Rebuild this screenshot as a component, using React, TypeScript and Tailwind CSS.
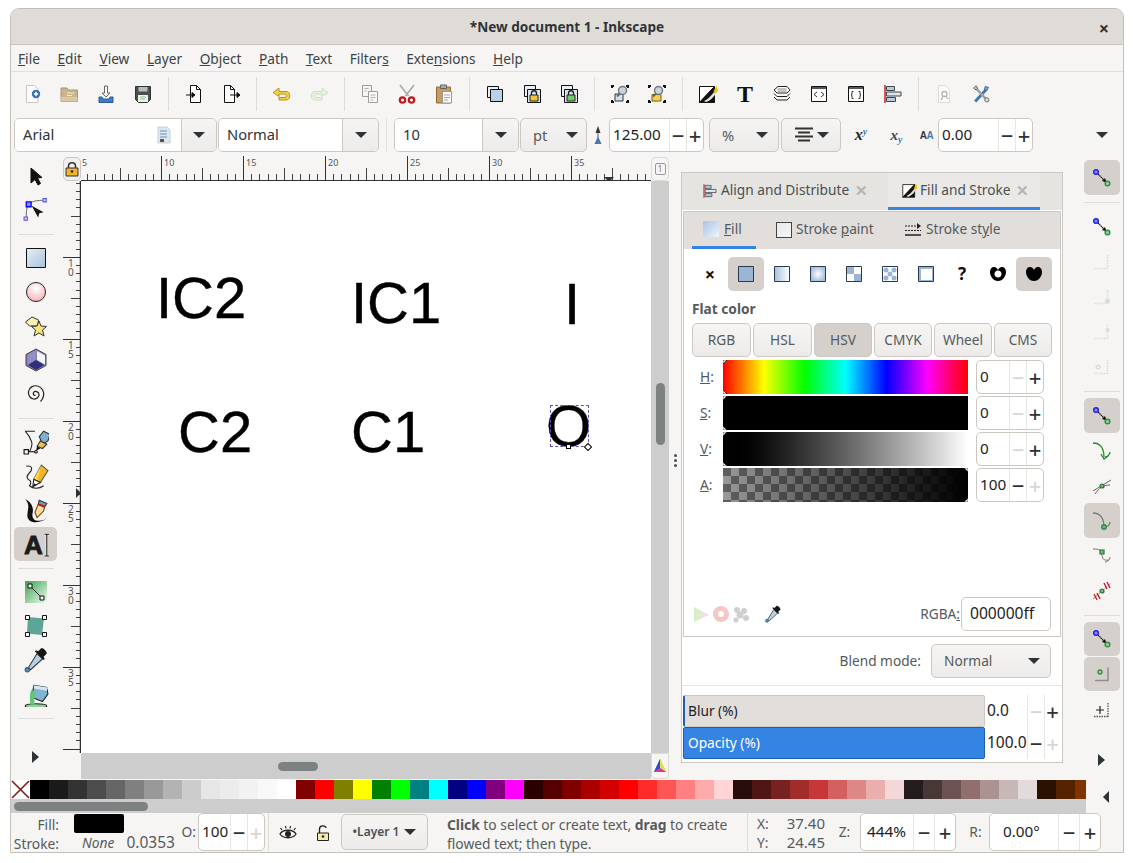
import React from 'react'

const Svg = ({ s = 24, children }: { s?: number; children: React.ReactNode }) => (
  <svg width={s} height={s} viewBox="0 0 24 24" className="block shrink-0">
    {children}
  </svg>
)

// ---- top toolbar icons ----
const IcNew = () => (
  <Svg>
    <path d="M6.500 3.500h8l3.500 3.500v13.500h-11.500z" fill="#fafafa" stroke="#c9c9c9" />
    <circle cx="16" cy="12" r="4.200" fill="#2f6fb5" />
    <path d="M13.800 12h4.400M16 9.800v4.400" stroke="#fff" strokeWidth="1.500" />
  </Svg>
)
const IcOpen = () => (
  <Svg>
    <path d="M4 6h6l1.500 2h9v11.500h-16.500z" fill="#c9b48c" stroke="#a8946e" />
    <path d="M10 11h7M10 13.500h5" stroke="#f3ead6" strokeWidth="1.200" />
    <path d="M4 15h16.500v4.500h-16.500z" fill="#d9c8a5" />
  </Svg>
)
const IcSave = () => (
  <Svg>
    <path d="M10.500 4h3v7h2.500l-4 4-4-4h2.500z" fill="#f4f4f4" stroke="#666" />
    <path d="M5 15h3l1 2h6l1-2h3v5.500h-14z" fill="#3c7fc4" stroke="#2a5d94" />
  </Svg>
)
const IcFloppy = () => (
  <Svg>
    <path d="M4.500 4.500h15v13l-3 3h-9l-3-3z" fill="#4c4f50" stroke="#333" />
    <path d="M7.500 5h9v4.500h-9z" fill="#b9bcbc" />
    <path d="M7 13h10v7h-10z" fill="#eef2ea" />
    <path d="M9 15h6M9 17h5" stroke="#97c78e" />
  </Svg>
)
const IcImport = () => (
  <Svg>
    <path d="M8.500 3.500h6l4 4v13h-10z" fill="#fff" stroke="#111" />
    <path d="M14.500 3.500v4h4" fill="none" stroke="#111" />
    <path d="M4 13h8M10 10.500l3 2.500-3 2.500z" stroke="#111" fill="#111" />
  </Svg>
)
const IcExport = () => (
  <Svg>
    <path d="M5.500 3.500h6l4 4v13h-10z" fill="#fff" stroke="#111" />
    <path d="M11.500 3.500v4h4" fill="none" stroke="#111" />
    <path d="M11 13h9M18 10.500l3 2.500-3 2.500z" stroke="#111" fill="#111" />
  </Svg>
)
const IcUndo = ({ pale }: { pale?: boolean }) => (
  <Svg>
    <path
      d="M9 6l-6 4.500 6 4v-2.500h6c2 0 2 3.500 0 3.500h-6v2.500h7c5 0 5-8.500 0-8.500h-7z"
      fill={pale ? '#e7f1e0' : '#f0d24a'}
      stroke={pale ? '#cfe0c4' : '#b9930f'}
      strokeWidth="1"
      transform={pale ? 'matrix(-1 0 0 1 24 0)' : undefined}
    />
  </Svg>
)
const IcCopy = () => (
  <Svg>
    <path d="M4.500 3.500h9v11h-9z" fill="#f6f5f4" stroke="#9c9c9c" />
    <path d="M10.500 9.500h9v11h-9z" fill="#fbfbfb" stroke="#9c9c9c" />
    <path d="M6.500 6.500h4M6.500 9h2M12.500 13h5M12.500 15.500h5M12.500 18h3" stroke="#b0b0b0" />
  </Svg>
)
const IcCut = () => (
  <Svg>
    <path d="M5 3l8.500 11M19 3l-8.500 11" stroke="#a9adad" strokeWidth="1.800" />
    <circle cx="7.500" cy="18" r="2.700" fill="#fff" stroke="#c4161c" strokeWidth="2.200" />
    <circle cx="16.500" cy="18" r="2.700" fill="#fff" stroke="#c4161c" strokeWidth="2.200" />
  </Svg>
)
const IcPaste = () => (
  <Svg>
    <path d="M4.500 5h14v16h-14z" fill="#c99a5e" stroke="#8f6a3a" />
    <path d="M8.500 3h6v3.500h-6z" fill="#aaa" stroke="#666" />
    <path d="M10.500 9.500h9v11.500h-9z" fill="#fafafa" stroke="#999" />
    <path d="M12 13h6M12 15.500h6M12 18h4" stroke="#aaa" />
  </Svg>
)
const IcDup = () => (
  <Svg>
    <path d="M4.500 4.500h11v11h-11z" fill="#e8eff6" stroke="#111" />
    <path d="M7.500 7.500h12v12h-12z" fill="#b9d0e6" stroke="#111" />
  </Svg>
)
const Lock = ({ c }: { c: string }) => (
  <>
    <path d="M11.500 13v-2c0-3 5-3 5 0v2" fill="none" stroke="#222" strokeWidth="1.300" />
    <path d="M10 13h8v6h-8z" fill={c} stroke="#222" />
  </>
)
const IcClone = ({ c }: { c: string }) => (
  <Svg>
    <path d="M4.500 3.500h11v11h-11z" fill="#e8eff6" stroke="#111" />
    <path d="M7.500 7.500h13v13h-13z" fill="#d8e4ef" stroke="#111" />
    <Lock c={c} />
  </Svg>
)
const Corners = () => (
  <path d="M3 3h3v2h-1v1h-2zM18 3h3v3h-2v-1h-1zM3 18h2v1h1v2h-3zM19 18h2v3h-3v-2h1z" fill="#111" />
)
const IcZoomSel = () => (
  <Svg>
    <Corners />
    <path d="M7 12h8v7h-8z" fill="#d5e3ef" stroke="#333" />
    <circle cx="14.500" cy="8.500" r="4" fill="#c7d6e4" stroke="#777" strokeWidth="1.500" />
    <path d="M12 11.500l-3 3" stroke="#666" strokeWidth="1.800" />
  </Svg>
)
const IcZoomDraw = () => (
  <Svg>
    <Corners />
    <path d="M7 12.500h9v6.500h-9z" fill="#f2cf55" stroke="#7a5c00" />
    <circle cx="13.500" cy="8.500" r="4" fill="#c7d6e4" stroke="#777" strokeWidth="1.500" />
    <path d="M11 11.500l-3 3" stroke="#666" strokeWidth="1.800" />
  </Svg>
)
const IcFillStroke = ({ s = 24 }: { s?: number }) => (
  <Svg s={s}>
    <path d="M3.500 4.500h15l-15 16z" fill="#fff" stroke="#111" />
    <path d="M3.500 20.500l15-16v16z" fill="#111" stroke="#111" />
    <path d="M8 19c3-1 7-5 10-9l2 1c-2 4-6 8-10 9z" fill="#e2e2e2" />
    <path d="M17.500 9.500l3-6 1.500 5-2 3z" fill="#f4c20d" />
  </Svg>
)
const IcT = () => (
  <Svg>
    <text x="12" y="20" textAnchor="middle" fontFamily="'Liberation Serif', serif" fontWeight="700" fontSize="24" fill="#111">
      T
    </text>
  </Svg>
)
const IcLayers = () => (
  <Svg>
    <path d="M4 8l4-3.500h9l3 3.500-3 3h-10z" fill="#fff" stroke="#222" />
    <path d="M4 11.500l3 3h10l3-3M4 15l3 3h10l3-3" fill="none" stroke="#222" />
    <path d="M7.500 7h9M7.500 9h9" stroke="#888" />
  </Svg>
)
const IcXml = () => (
  <Svg>
    <path d="M4.500 4.500h15v15h-15z" fill="#fff" stroke="#111" />
    <path d="M5 5h14v2h-14z" fill="#555" />
    <path d="M10 10l-3 2.500 3 2.500M14 10l3 2.500-3 2.500" fill="none" stroke="#333" />
  </Svg>
)
const IcObj = () => (
  <Svg>
    <path d="M4.500 4.500h15v15h-15z" fill="#fff" stroke="#111" />
    <path d="M5 5h14v2h-14z" fill="#555" />
    <path d="M9.500 9.500h-1.500v3l-1 .5 1 .5v3h1.500M14.500 9.500h1.500v3l1 .5-1 .5v3h-1.500" fill="none" stroke="#333" />
  </Svg>
)
const IcAlign = ({ s = 24 }: { s?: number }) => (
  <Svg s={s}>
    <path d="M4 3v18" stroke="#c2181f" strokeWidth="1.400" />
    <path d="M5.500 4.500h8v4h-8z" fill="#b4cbe0" stroke="#444" />
    <path d="M5.500 10h14.500v4h-14.500z" fill="#dbe5ef" stroke="#444" />
    <path d="M5.500 15.500h9v4h-9z" fill="#b4cbe0" stroke="#444" />
  </Svg>
)
const IcDocProps = () => (
  <Svg>
    <path d="M6.500 3.500h7l4 4v13h-11z" fill="#fafafa" stroke="#dcdcdc" />
    <circle cx="12.500" cy="12" r="2.500" fill="none" stroke="#b4b4b4" strokeWidth="1.300" />
    <path d="M11 14l-2 4M14 14l2 3" stroke="#b4b4b4" strokeWidth="1.300" />
  </Svg>
)
const IcTools = () => (
  <svg width="20" height="20" viewBox="0 0 24 24" className="block">
    <path d="M5 21l13-14" stroke="#3a78b5" strokeWidth="3.500" />
    <path d="M5 4l14 15" stroke="#9ba3a8" strokeWidth="3" />
    <path d="M17 3l4 1-2 4-3-1z" fill="#7ea6ca" stroke="#33597e" />
    <path d="M3 5l3-3 2 3-2 2z" fill="#bcc4c9" stroke="#555" />
    <circle cx="19" cy="19" r="2.500" fill="#dfe3e6" stroke="#555" />
  </svg>
)

// ---- left toolbar icons ----
const IcSelector = () => (
  <Svg>
    <path d="M7 4v15l4-3.500 3 5.500 2.500-1.500-3-5.500 4.500-.5z" fill="#111" stroke="#111" />
  </Svg>
)
const IcNode = () => (
  <Svg s={26}>
    <path d="M5 7c2-3 8-4 15-4M5 7c-2 3-2 7-2 13" fill="none" stroke="#555" strokeWidth="0.800" />
    <path d="M3 4.500h4.500v4.500h-4.500z" fill="#8d8dff" stroke="#0000ff" strokeWidth="1.200" />
    <path d="M18.500 1.500h3v3h-3zM1 18.500h3v3h-3z" fill="#d8d8ff" stroke="#5555ee" />
    <path d="M8 8l11 6-4 1-1 4z" fill="#111" />
  </Svg>
)
const IcRect = () => (
  <svg width="20" height="20" viewBox="0 0 20 20" className="block">
    <defs>
      <linearGradient id="rectg" x1="0" y1="0" x2="1" y2="1">
        <stop offset="0" stopColor="#e7eff7" />
        <stop offset="1" stopColor="#a6c3dc" />
      </linearGradient>
    </defs>
    <path d="M.500 .500h19v19h-19z" fill="url(#rectg)" stroke="#111" />
  </svg>
)
const IcEllipse = () => (
  <svg width="20" height="20" viewBox="0 0 20 20" className="block">
    <defs>
      <radialGradient id="ellg" cx="0.500" cy="0.300" r="0.800">
        <stop offset="0" stopColor="#fff" />
        <stop offset="1" stopColor="#f9aab0" />
      </radialGradient>
    </defs>
    <circle cx="10" cy="10" r="9.500" fill="url(#ellg)" stroke="#222" />
  </svg>
)
const IcStar = () => (
  <Svg>
    <path d="M1.500 8l6.500-5 6.500 3-1 6h-8z" fill="#faf0b0" stroke="#333" />
    <path d="M15 7l2 5 5.500 .5-4 3.500 1.500 6-5-3-5 3 1.500-6-4-3.500 5.500-.5z" fill="#f6e57c" stroke="#333" />
  </Svg>
)
const Ic3d = () => (
  <Svg>
    <path d="M12 1l10 5.500v11l-10 5.500-10-5.500v-11z" fill="#7f7fb8" stroke="#444" />
    <path d="M13 3l8 4.500v9l-8-4.500z" fill="#f4f4fa" />
    <path d="M4 17l8-5 8 5-8 5z" fill="#2f2f77" />
    <path d="M3.500 7l8.500-5v9l-8.500 6z" fill="#9090c4" />
  </Svg>
)
const IcSpiral = () => (
  <Svg>
    <path
      d="M12.500 13c-1.500 1-3-1-2-2.500 1.500-2 5-1 5.500 1.500.5 3-2.500 5.500-5.500 5-3.500-.5-5.500-4-5-7.500.5-4 5-6.500 9-5.500 4.500 1 7 5.500 6 10-.500 2.500-1.500 4-3 5.500"
      fill="none"
      stroke="#222"
      strokeWidth="1.200"
      transform="translate(-1 0)"
    />
  </Svg>
)
const IcPen = () => (
  <Svg s={26}>
    <path d="M2 2h9M2 2c3 3 5 7 6 10s-1 7-2 9" fill="none" stroke="#222" />
    <path d="M1 19h4v4h-4z" fill="#fff" stroke="#111" />
    <path d="M5 21h7" stroke="#111" />
    <circle cx="12" cy="21" r="1.200" fill="#fff" stroke="#111" />
    <path d="M15 7l4-5 6 3-2 6-5 3z" fill="#7fb0cf" stroke="#333" />
    <path d="M13 16l3-5 6 3-4 4z" fill="#f0c24a" stroke="#333" />
    <path d="M13 16l-1 4 4-2z" fill="#111" />
  </Svg>
)
const IcPencil = () => (
  <Svg s={26}>
    <path d="M3 3c6-1 6 3 3 6s-3 5 0 7c2 1 1 4 0 5 3 3 9 3 13 0" fill="none" stroke="#222" />
    <path d="M17 2l6 5-7 11-6-3z" fill="#f7b51d" stroke="#555" />
    <path d="M17 2l-7 13 3 1.500z" fill="#fbdc55" />
    <path d="M10 15l6 3-7 4z" fill="#fff" stroke="#222" />
    <path d="M9 22l1.500-3 2 1z" fill="#111" />
  </Svg>
)
const IcCalli = () => (
  <Svg s={26}>
    <path d="M2 2c5 2 8 7 7 12-1 4 0 8 6 8 3 0 5-1 7-3-3 5-18 7-18-2 0-5 3-10-2-15z" fill="#111" />
    <path d="M15 3l7 3-2 3-6-2z" fill="#6d9fc5" stroke="#333" />
    <path d="M14 7l6 2-1 4-6 6-2-5z" fill="#f6dfa3" stroke="#7a3b00" />
    <path d="M15 7l5 2" stroke="#c4161c" strokeWidth="2" />
  </Svg>
)
const IcTextTool = () => (
  <Svg s={26}>
    <text x="1" y="21" fontFamily="'Liberation Sans', sans-serif" fontWeight="700" fontSize="24" stroke="#1b1b1b" strokeWidth="0.800" fill="#1b1b1b">
      A
    </text>
    <path d="M20 3h4M22 3v20M20 23h4" stroke="#fff" strokeWidth="2" fill="none" />
    <path d="M20 3h4M22 3v20M20 23h4" stroke="#111" fill="none" />
  </Svg>
)
const IcGrad = () => (
  <svg width="22" height="22" viewBox="0 0 22 22" className="block">
    <defs>
      <linearGradient id="gradg" x1="0" y1="0" x2="1" y2="1">
        <stop offset="0" stopColor="#3aa24a" />
        <stop offset="1" stopColor="#f2fbf2" />
      </linearGradient>
    </defs>
    <path d="M0 0h22v22h-22z" fill="url(#gradg)" />
    <path d="M5 5l12 12" stroke="#333" />
    <path d="M3 3h4v4h-4zM15 15h4v4h-4z" fill="#f4f4f4" stroke="#111" />
  </svg>
)
const IcMesh = () => (
  <Svg>
    <path d="M4 3l16 1.500-2 16.500-15-1.500z" fill="#5fa597" />
    <path d="M1.500 1.500h4v4h-4zM18.500 1.500h4v4h-4zM1.500 18.500h4v4h-4zM18.500 18.500h4v4h-4z" fill="#fff" stroke="#111" />
  </Svg>
)
const IcDropper = ({ s = 24 }: { s?: number }) => (
  <Svg s={s}>
    <path d="M13 6l5 5-11 10-2-2z" fill="#b7d0e3" stroke="#333" />
    <path d="M14 4l3-3c2 0 5 3 5 5l-3 3 1 2-1 1-8-8 1-1z" fill="#151515" />
    <circle cx="4" cy="21" r="2" fill="#5a94bd" stroke="#2c5d80" />
  </Svg>
)
const IcBucket = () => (
  <Svg s={26}>
    <ellipse cx="12" cy="23" rx="10" ry="2" fill="#8fd19a" stroke="#222" />
    <path d="M10 4l12 2 1 6-5 7-10-4z" fill="#7fb3cf" stroke="#222" />
    <path d="M10 4l13 2-1 3-12-2z" fill="#d5e6ef" />
    <path d="M8 8c-2 3-2 8-1 14h4c-1-4-1-7 1-10z" fill="#66c37a" />
  </Svg>
)

// ---- snap bar icons ----
const SnapPair = () => (
  <svg width="20" height="20" viewBox="0 0 20 20" className="block">
    <circle cx="4" cy="4" r="2.300" fill="#8b8bff" stroke="#2222ee" strokeWidth="1.500" />
    <path d="M6 6l7 7" stroke="#111" strokeWidth="1.200" strokeDasharray="1.500 .5" />
    <path d="M14.500 14.500l-4.500-1.500 3-3z" fill="#111" />
    <circle cx="15.500" cy="15.500" r="2.300" fill="#9bd39b" stroke="#2f8f3f" strokeWidth="1.500" />
  </svg>
)
const SnapFaded = ({ k }: { k: number }) => (
  <svg width="20" height="20" viewBox="0 0 20 20" className="block">
    <path d="M2 16.500h13M15.500 17v-14" stroke="#dcdcd8" strokeWidth="1.500" strokeDasharray="1.500 1" fill="none" />
    {k === 1 && <circle cx="15.500" cy="14" r="2.500" fill="#d3e2d3" />}
    {k === 2 && <circle cx="15.500" cy="8" r="2" fill="#d3e2d3" />}
    {k === 3 && <circle cx="6" cy="10" r="2" fill="#eef3ee" stroke="#c9d9cf" />}
  </svg>
)
const SnapCurve = ({ g }: { g?: boolean }) => (
  <svg width="20" height="20" viewBox="0 0 20 20" className="block">
    <path d="M1 2c6 0 11 4 11 14M13 16c2 0 5-2 5-5" fill="none" stroke={g ? '#1d8b27' : '#777'} strokeWidth="1.300" />
    {g ? (
      <path d="M9 13l3 5 4-3" fill="none" stroke="#1d8b27" strokeWidth="1.300" />
    ) : (
      <circle cx="12" cy="16" r="2.300" fill="#8a9" stroke="#2f8f3f" strokeWidth="1.400" />
    )}
  </svg>
)
const SnapCusp = () => (
  <svg width="20" height="20" viewBox="0 0 20 20" className="block">
    <path d="M1 3c6 0 9 1 9 5 0 4 1 7 7 6M13 16c2 0 5-2 5-5" fill="none" stroke="#777" />
    <path d="M8 4h4v4h-4z" fill="#8a9" stroke="#1d7b27" strokeWidth="1.200" />
  </svg>
)
const SnapCross = () => (
  <svg width="20" height="20" viewBox="0 0 20 20" className="block">
    <path d="M1 15l18-11M3 18c4-6 8-9 15-9" fill="none" stroke="#666" />
    <circle cx="10" cy="10" r="2" fill="#8a9" stroke="#1d7b27" strokeWidth="1.200" />
  </svg>
)
const SnapLine = () => (
  <svg width="20" height="20" viewBox="0 0 20 20" className="block">
    <path d="M1 18L19 2" stroke="#cc1020" strokeWidth="1" strokeDasharray="1 1" />
    <path d="M2 13l3 6M5 12l3 6M12 2l3 6M15 1l3 6" stroke="#cc1020" strokeWidth="1.300" />
    <circle cx="10" cy="10" r="2" fill="#8a9" stroke="#1d7b27" strokeWidth="1.200" />
  </svg>
)
const SnapMid = () => (
  <svg width="20" height="20" viewBox="0 0 20 20" className="block">
    <path d="M3 16.500h13v-13" fill="none" stroke="#8f8f8f" strokeWidth="1.500" />
    <circle cx="8" cy="8" r="2" fill="#9bd39b" stroke="#2f8f3f" strokeWidth="1.300" />
  </svg>
)
const SnapGuide = () => (
  <svg width="20" height="20" viewBox="0 0 20 20" className="block">
    <path d="M2 16.500h14M16 17v-14" stroke="#555" strokeWidth="1.300" strokeDasharray="1.500 1" fill="none" />
    <path d="M4 10h8M8 6v8" stroke="#222" strokeWidth="1.200" />
  </svg>
)

// ---- paint mode icons ----
const Paint = ({ fill, extra }: { fill: string; extra?: React.ReactNode }) => (
  <svg width="16" height="16" viewBox="0 0 16 16" className="block">
    <path d="M.500 .500h15v15h-15z" fill={fill} stroke="#2a3a4a" />
    {extra}
  </svg>
)
const PaintDefs = () => (
  <svg width="0" height="0" className="absolute">
    <defs>
      <linearGradient id="plin">
        <stop offset="0" stopColor="#a7c1de" />
        <stop offset="1" stopColor="#fff" />
      </linearGradient>
      <radialGradient id="prad">
        <stop offset="0" stopColor="#fff" />
        <stop offset="1" stopColor="#a7c1de" />
      </radialGradient>
    </defs>
  </svg>
)
const Heart = ({ hole }: { hole?: boolean }) => (
  <svg width="16" height="16" viewBox="0 0 16 16" className="block">
    <path d="M4 1c2 0 3 1 4 3 1-2 2-3 4-3 2.500 0 4 2 4 5 0 4-3 9-8 9s-8-5-8-9c0-3 1.500-5 4-5z" fill="#000" />
    {hole && <path d="M8 4.500c2 0 3.500 1.500 3.500 3.500s-1.500 3.500-3.500 3.500-3.500-1.500-3.500-3.500 1.500-3.500 3.500-3.500z" fill="#fff" />}
  </svg>
)

// ---- shared bits ----
const Chevron = ({ className = '' }: { className?: string }) => (
  <span className={`w-0 h-0 border-x-[6px] border-x-transparent border-t-[6px] border-t-[#2e3436] ${className}`} />
)

const Sep = () => (
  <div className="w-[14px] h-[34px] flex justify-center shrink-0">
    <div className="w-px h-full bg-[#dedcd9]" />
  </div>
)
const HSep = () => (
  <div className="h-[14px] flex items-center justify-center w-full shrink-0">
    <div className="h-px w-[36px] bg-[#dedcd9]" />
  </div>
)

const Tool = ({ children }: { children: React.ReactNode }) => (
  <div className="w-[37px] h-[34px] flex items-center justify-center shrink-0">{children}</div>
)
const VTool = ({ children, on }: { children: React.ReactNode; on?: boolean }) => (
  <div className={`h-[34px] w-[43px] flex items-center justify-center rounded-[5px] shrink-0 ${on ? 'bg-[#d5d0cc]' : ''}`}>
    {children}
  </div>
)

const Combo = ({ text, className, arrow, icon }: { text: string; className: string; arrow: string; icon?: React.ReactNode }) => (
  <div className={`h-[34px] flex rounded-[5px] border border-[#cdc7c2] shrink-0 overflow-hidden ${className}`}>
    <div className="flex-1 bg-white flex items-center pl-[8px] pr-[10px] pb-[2px] justify-between">
      <span>{text}</span>
      {icon}
    </div>
    <div className={`${arrow} border-l border-[#cdc7c2] bg-gradient-to-b from-[#f6f5f4] to-[#edebe9] flex items-center justify-center`}>
      <Chevron />
    </div>
  </div>
)

const Select = ({ text, className }: { text: React.ReactNode; className: string }) => (
  <div className={`h-[34px] flex items-center justify-between rounded-[5px] border border-[#cdc7c2] bg-gradient-to-b from-[#f6f5f4] to-[#edebe9] shrink-0 ${className}`}>
    {text}
    <Chevron />
  </div>
)

const Spin = ({
  value,
  className,
  entry = 'pl-[3px]',
  noMinus,
  noPlus,
  btn = 'w-[17px]',
  hClass = 'h-[34px]',
}: {
  value: string
  className: string
  entry?: string
  noMinus?: boolean
  noPlus?: boolean
  btn?: string
  hClass?: string
}) => (
  <div className={`${hClass} flex rounded-[5px] border border-[#cdc7c2] bg-white shrink-0 overflow-hidden ${className}`}>
    <div className={`flex-1 flex items-center pb-[2px] text-[15.300px] text-[#1d1d1d] ${entry}`}>{value}</div>
    <div className={`${btn} border-l border-[#e8e6e3] flex items-center justify-center text-[22px] font-medium leading-none ${noMinus ? 'text-[#d6d6d4]' : 'text-[#2e3436]'}`}>
      −
    </div>
    <div className={`${btn} border-l border-[#e8e6e3] flex items-center justify-center text-[22px] font-medium leading-none ${noPlus ? 'text-[#d6d6d4]' : 'text-[#2e3436]'}`}>
      +
    </div>
  </div>
)

// ---- rulers ----
const xMajors = [79, 161, 243, 325, 407, 489, 571]
const TopRuler = () => {
  const ticks: React.ReactNode[] = []
  for (let i = 0; i < 70; i++) {
    const x = 81 - 63 + 8.2 * i - 2
    const big = i % 10 === 0
    const mid = i % 5 === 0
    ticks.push(
      <path key={i} d={`M${Math.round(x) + 0.5} 26V${big ? 1 : mid ? 13 : 19}`} stroke={big ? '#2e3436' : '#3c4144'} strokeWidth="1" />
    )
  }
  return (
    <svg width="570" height="26" className="block" viewBox="18 0 570 26">
      {ticks}
      {xMajors.map((x, i) => (
        <text key={x} x={x - 63 + 3} y="11" fontSize="9" fill="#555" fontFamily="'Noto Sans', sans-serif">
          {5 + i * 5}
        </text>
      ))}
      <path d="M18 25.500h570" stroke="#2e3436" />
      <path d="M541 22h10l-5 5z" fill="#2e3436" />
    </svg>
  )
}

const leftLabels = [10, 15, 20, 25, 30, 35]
const LeftRuler = () => {
  const ticks: React.ReactNode[] = []
  for (let i = 0; i < 70; i++) {
    const y = 2 + 8.2 * i - 0.1
    const major = i % 10 === 9
    const mid = i % 10 === 4
    ticks.push(
      <path key={i} d={`M18 ${Math.round(y) + 0.5}H${major ? 0 : mid ? 8 : 13}`} stroke={major ? '#2e3436' : '#3c4144'} strokeWidth="1" />
    )
  }
  return (
    <svg width="18" height="572" className="block">
      {ticks}
      {leftLabels.map((v, i) => {
        const [a, b] = String(v).split('')
        const y = 75 + i * 82
        return (
          <g key={v} fontSize="10" fill="#555" fontFamily="'Noto Sans', sans-serif">
            <text x="5" y={y + 11}>{a}</text>
            <text x="5" y={y + 20}>{b}</text>
          </g>
        )
      })}
      <path d="M17.500 0v572" stroke="#2e3436" strokeWidth="1.500" />
      <path d="M13 307v10l5-5z" fill="#2e3436" />
    </svg>
  )
}

// ---- palette ----
const swatches = [
  '#000000', '#1a1a1a', '#333333', '#4d4d4d', '#666666', '#808080', '#999999', '#b3b3b3', '#cccccc', '#e6e6e6', '#ececec', '#f2f2f2', '#f9f9f9', '#ffffff',
  '#800000', '#ff0000', '#808000', '#ffff00', '#008000', '#00ff00', '#008080', '#00ffff', '#000080', '#0000ff', '#800080', '#ff00ff',
  '#2b0000', '#550000', '#800000', '#aa0000', '#d40000', '#ff0000', '#ff2a2a', '#ff5555', '#ff8080', '#ffaaaa', '#ffd5d5',
  '#280b0b', '#501616', '#782121', '#a02c2c', '#c83737', '#d35f5f', '#de8787', '#e9afaf', '#f4d7d7',
  '#241c1c', '#483737', '#6c5353', '#916f6f', '#ac9393', '#c8b7b7', '#e3dbdb',
  '#2b1100', '#552200', '#803300',
]

const BarMark = ({ side }: { side: 'left' | 'right' }) => (
  <svg width="5" height="34" viewBox="0 0 5 34" className={`absolute top-0 ${side === 'left' ? 'left-0' : 'right-0'}`}>
    {side === 'left' ? (
      <path d="M0 0h4l-4 4zM0 34h4l-4-4z" fill="#fff" stroke="#000" strokeWidth="0.600" />
    ) : (
      <path d="M5 0h-4l4 4zM5 34h-4l4-4z" fill="#fff" stroke="#000" strokeWidth="0.600" />
    )}
  </svg>
)

const SliderRow = ({
  label,
  bar,
  value,
  noMinus,
  noPlus,
  side = 'left',
}: {
  label: string
  bar: string
  value: string
  noMinus?: boolean
  noPlus?: boolean
  side?: 'left' | 'right'
}) => (
  <div className="flex h-[34px] items-center mb-[2px]">
    <div className="w-[31px] pl-[8px] text-[#555a5c]">
      <u>{label}</u>:
    </div>
    <div className={`relative w-[245px] h-[34px] ${bar}`}>
      <BarMark side={side} />
    </div>
    <Spin value={value} noMinus={noMinus} noPlus={noPlus} className="ml-[8px] w-[68px]" />
  </div>
)

const modes = [
  { t: 'RGB', w: 'w-[59px]' },
  { t: 'HSL', w: 'w-[59px]' },
  { t: 'HSV', w: 'w-[58px]' },
  { t: 'CMYK', w: 'w-[58px]' },
  { t: 'Wheel', w: 'w-[58px]' },
  { t: 'CMS', w: 'w-[58px]' },
]

const canvasTexts = [
  { t: 'IC2', cls: 'left-[75px] top-[87px]' },
  { t: 'IC1', cls: 'left-[270px] top-[92px]' },
  { t: 'I', cls: 'left-[483px] top-[93px]' },
  { t: 'C2', cls: 'left-[97px] top-[221px]' },
  { t: 'C1', cls: 'left-[270px] top-[221px]' },
  { t: 'O', cls: 'left-[465px] top-[215px]' },
]

export default function App() {
  return (
    <div className="w-[1133px] h-[863px] bg-white pt-2 pl-[10px] overflow-hidden font-['Noto_Sans',sans-serif] text-[13.700px] text-[#2e3436]">
      <PaintDefs />
      <div className="w-[1114px] h-[845px] rounded-t-[9px] border border-[#c3c0bb] bg-[#f6f5f4] flex flex-col overflow-hidden">
        {/* title bar */}
        <div className="h-[36px] shrink-0 flex items-center pt-[2px] bg-[#dfdcd8] border-b border-[#c7c3be]">
          <div className="w-[40px]" />
          <div className="flex-1 text-center font-bold text-[13.600px] text-[#2e3436]">*New document 1 - Inkscape</div>
          <div className="w-[40px] text-center font-bold text-[18px] leading-none pl-[2px]">×</div>
        </div>

        {/* menu */}
        <div className="h-[27px] shrink-0 flex items-center gap-[17.500px] pl-[7px] pt-[2px] border-b border-[#e1dfdc] text-[#3d4346]">
          <span><u>F</u>ile</span>
          <span><u>E</u>dit</span>
          <span><u>V</u>iew</span>
          <span><u>L</u>ayer</span>
          <span><u>O</u>bject</span>
          <span><u>P</u>ath</span>
          <span><u>T</u>ext</span>
          <span>Filter<u>s</u></span>
          <span>Exte<u>n</u>sions</span>
          <span><u>H</u>elp</span>
        </div>

        {/* commands */}
        <div className="h-[46px] shrink-0 flex items-center pl-[2px] pb-[3px]">
          <Tool><IcNew /></Tool>
          <Tool><IcOpen /></Tool>
          <Tool><IcSave /></Tool>
          <Tool><IcFloppy /></Tool>
          <Sep />
          <Tool><IcImport /></Tool>
          <Tool><IcExport /></Tool>
          <Sep />
          <Tool><IcUndo /></Tool>
          <Tool><IcUndo pale /></Tool>
          <Sep />
          <Tool><IcCopy /></Tool>
          <Tool><IcCut /></Tool>
          <Tool><IcPaste /></Tool>
          <Sep />
          <Tool><IcDup /></Tool>
          <Tool><IcClone c="#f2c832" /></Tool>
          <Tool><IcClone c="#79c86e" /></Tool>
          <Sep />
          <Tool><IcZoomSel /></Tool>
          <Tool><IcZoomDraw /></Tool>
          <Sep />
          <Tool><IcFillStroke /></Tool>
          <Tool><IcT /></Tool>
          <Tool><IcLayers /></Tool>
          <Tool><IcXml /></Tool>
          <Tool><IcObj /></Tool>
          <Tool><IcAlign /></Tool>
          <Sep />
          <Tool><IcDocProps /></Tool>
          <Tool><IcTools /></Tool>
        </div>

        {/* text options */}
        <div className="h-[37px] shrink-0 flex items-start pl-[3px] text-[#2e3436] text-[14.700px]">
          <Combo
            text="Arial"
            className="w-[203px]"
            arrow="w-[35px]"
            icon={
              <svg width="14" height="18" viewBox="0 0 14 18" className="block mt-[2px]">
                <path d="M1 1h9l3 3v13h-12z" fill="#dde7f0" stroke="#c9d0d8" />
                <path d="M3 5h7M3 8h7M3 11h7" stroke="#6c8fb4" />
                <path d="M3 13h4v3h-4z" fill="#555" />
              </svg>
            }
          />
          <Combo text="Normal" className="w-[161px] ml-[1px]" arrow="w-[36px]" />
          <div className="w-[15px] h-[34px] flex justify-center">
            <div className="w-px h-full bg-[#e4e2df]" />
          </div>
          <Combo text="10" className="w-[125px]" arrow="w-[36px]" />
          <Select text={<span>pt</span>} className="w-[67px] ml-[1px] pl-[12px] pr-[8px] text-[#555a5c]" />
          <div className="w-[22px] h-[34px] flex items-center justify-center">
            <svg width="12" height="20" viewBox="0 0 12 20" className="block">
              <path d="M6 1l2.500 7h-5z" fill="#333" />
              <path d="M6 11l3.500 8h-7z" fill="#4a79a8" />
              <path d="M6 7v5" stroke="#555" />
            </svg>
          </div>
          <Spin value="125.00" className="w-[95px]" />
          <Select text={<span>%</span>} className="w-[70px] ml-[5px] pl-[12px] pr-[10px] text-[#555a5c]" />
          <div className="w-[60px] h-[34px] ml-[2px] flex items-center justify-center gap-[3px] rounded-[5px] border border-[#cdc7c2] bg-gradient-to-b from-[#f6f5f4] to-[#edebe9] shrink-0">
            <svg width="20" height="18" viewBox="0 0 20 18" className="block">
              <path d="M1 2.500h18M4 6.500h12M1 10.500h18M4 14.500h12" stroke="#333" strokeWidth="1.800" />
            </svg>
            <Chevron />
          </div>
          <div className="w-[37px] h-[34px] flex items-center justify-center shrink-0 font-['Liberation_Serif',serif] italic font-bold text-[16px]">
            <span className="text-[#222] ml-[3px]">x</span>
            <span className="text-[10px] text-[#4a79a8] -mt-[8px]">y</span>
          </div>
          <div className="w-[37px] h-[34px] flex items-center justify-center shrink-0 font-['Liberation_Serif',serif] italic font-bold text-[15px]">
            <span className="text-[#444]">x</span>
            <span className="text-[10px] text-[#4a79a8] mt-[8px]">y</span>
          </div>
          <div className="w-[23px] h-[34px] flex items-center justify-center shrink-0 font-['Liberation_Sans',sans-serif] font-bold text-[10px] tracking-[-0.5px]">
            <span className="text-[#333]">A</span>
            <span className="text-[#4a79a8]">A</span>
          </div>
          <Spin value="0.00" className="w-[95px]" />
          <div className="w-[75px] h-[34px] flex items-center justify-end">
            <Chevron />
          </div>
        </div>

        {/* main */}
        <div className="h-[624px] shrink-0 flex">
          {/* tool bar */}
          <div className="w-[52px] shrink-0 flex flex-col items-center pt-[4px] pl-[2px] pr-[5px]">
            <VTool><IcSelector /></VTool>
            <VTool><IcNode /></VTool>
            <HSep />
            <VTool><IcRect /></VTool>
            <VTool><IcEllipse /></VTool>
            <VTool><IcStar /></VTool>
            <VTool><Ic3d /></VTool>
            <VTool><IcSpiral /></VTool>
            <HSep />
            <VTool><IcPen /></VTool>
            <VTool><IcPencil /></VTool>
            <VTool><IcCalli /></VTool>
            <VTool on><IcTextTool /></VTool>
            <HSep />
            <VTool><IcGrad /></VTool>
            <VTool><IcMesh /></VTool>
            <VTool><IcDropper s={26} /></VTool>
            <VTool><IcBucket /></VTool>
            <HSep />
            <div className="mt-[26px] w-0 h-0 border-y-[6px] border-y-transparent border-l-[7px] border-l-[#2e3436]" />
          </div>

          {/* canvas column */}
          <div className="w-[606px] shrink-0 flex flex-col">
            <div className="h-[26px] flex shrink-0">
              <div className="w-[18px] pt-[2px]">
                <div className="w-[18px] h-[24px] rounded-[5px] border border-[#cdc7c2] bg-[#f0efed] flex items-center justify-center">
                  <svg width="14" height="16" viewBox="0 0 14 16" className="block">
                    <path d="M3.500 7V5c0-4.500 7-4.500 7 0v2" fill="none" stroke="#333" strokeWidth="1.500" />
                    <path d="M1 7h12v8h-12z" fill="#f0b429" stroke="#333" />
                    <circle cx="7" cy="10.500" r="1.300" fill="#222" />
                  </svg>
                </div>
              </div>
              <TopRuler />
              <div className="w-[18px] pt-[2px]">
                <div className="w-[18px] h-[24px] rounded-[5px] border border-[#dedbd7] bg-[#f6f5f4] flex items-center justify-center">
                  <div className="w-[11px] h-[12px] rounded-[2px] border border-[#999] text-[8px] leading-[10px] text-center text-[#777]">1</div>
                </div>
              </div>
            </div>
            <div className="h-[572px] flex shrink-0">
              <LeftRuler />
              <div className="relative w-[570px] h-[572px] bg-white overflow-hidden font-['Liberation_Sans',sans-serif] text-[58px] leading-[59px] text-black [-webkit-text-stroke:0.4px_#000]">
                {canvasTexts.map(c => (
                  <span key={c.t} className={`absolute ${c.cls}`}>
                    {c.t}
                  </span>
                ))}
                <div className="absolute left-[469px] top-[224px] w-[39px] h-[42px] border border-dashed border-[#5a55b5]" />
                <div className="absolute left-[485px] top-[263px] w-[5px] h-[5px] bg-white border border-black" />
                <div className="absolute left-[504px] top-[263px] w-[6px] h-[6px] rotate-45 bg-white border border-black" />
              </div>
              <div className="w-[18px] bg-[#cdcdcd] flex justify-center pt-[202px]">
                <div className="w-[9px] h-[62px] rounded-full bg-[#7e8182]" />
              </div>
            </div>
            <div className="flex-1 flex">
              <div className="w-[18px] bg-[#f6f5f4]" />
              <div className="w-[570px] bg-[#cdcdcd] flex items-center pl-[197px]">
                <div className="w-[40px] h-[9px] rounded-full bg-[#7e8182]" />
              </div>
              <div className="w-[18px] bg-[#f6f5f4] flex items-center justify-center rounded-b-[4px] border border-[#dedbd7]">
                <svg width="14" height="16" viewBox="0 0 14 16" className="block">
                  <path d="M7 1l6 13h-12z" fill="#33bb55" />
                  <path d="M7 1l6 13-6-4z" fill="#e8e23a" />
                  <path d="M1 14l6-4v-9z" fill="#3344dd" />
                  <path d="M1 14h12l-6-4z" fill="#dd33aa" />
                </svg>
              </div>
            </div>
          </div>

          {/* pane handle */}
          <div className="w-[12px] shrink-0 flex flex-col items-center justify-center gap-[2px] pb-[13px]">
            <div className="w-[3px] h-[3px] rounded-full bg-[#4a4f52]" />
            <div className="w-[3px] h-[3px] rounded-full bg-[#4a4f52]" />
            <div className="w-[3px] h-[3px] rounded-full bg-[#4a4f52]" />
          </div>

          {/* dock */}
          <div className="w-[382px] shrink-0 pt-[17px]">
            <div className="h-[591px] border border-[#cdc7c2] bg-white flex flex-col text-[#555a5c]">
              <div className="h-[37px] shrink-0 flex bg-[#e6e4e1] text-[#4a4f52]">
                <div className="w-[206px] flex items-center pl-[19px] gap-[2px] pb-[2px]">
                  <IcAlign s={18} />
                  <span>Align and Distribute</span>
                  <span className="ml-[4px] text-[#b4b4b2] font-bold text-[15px] leading-none">✕</span>
                </div>
                <div className="w-[152px] flex items-center pl-[12px] gap-[1px] border-b-[3px] border-[#3584e4] bg-[#ebe9e7]">
                  <IcFillStroke s={19} />
                  <span>Fill and Stroke</span>
                  <span className="ml-[4px] text-[#b4b4b2] font-bold text-[15px] leading-none">✕</span>
                </div>
              </div>
              <div className="h-[426px] mx-px mt-px shrink-0 border border-[#cdc7c2] flex flex-col">
                <div className="h-[37px] shrink-0 flex bg-[#e1dedb] pl-[8px]">
                  <div className="w-[64px] flex items-center pl-[11px] gap-[5px] border-b-[3px] border-[#3584e4]">
                    <span className="w-[16px] h-[16px] bg-gradient-to-br from-[#a9c4e4] to-[#f0f4f9]" />
                    <span><u>F</u>ill</span>
                  </div>
                  <div className="w-[148px] flex items-center pl-[20px] gap-[4px] pb-[2px]">
                    <span className="w-[16px] h-[16px] border border-[#444] bg-gradient-to-br from-[#e8e8e8] to-[#f6f6f6]" />
                    <span>Stroke <u>p</u>aint</span>
                  </div>
                  <div className="flex items-center pl-[1px] gap-[4px] pb-[2px]">
                    <svg width="17" height="16" viewBox="0 0 17 16" className="block">
                      <path d="M0 4h13M0 8.500h16" stroke="#222" strokeWidth="1.200" strokeDasharray="2 1" />
                      <path d="M0 13h16" stroke="#222" strokeWidth="1.500" />
                      <path d="M12 1l4 3-4 3z" fill="#222" />
                    </svg>
                    <span>Stroke st<u>y</u>le</span>
                  </div>
                </div>

                {/* paint modes */}
                <div className="h-[34px] mt-[8px] shrink-0 flex pl-[8px]">
                  <div className="w-[36px] flex items-center justify-center text-[#111] font-bold text-[18px]">×</div>
                  <div className="w-[36px] flex items-center justify-center rounded-[5px] bg-[#d5d0cc]"><Paint fill="#9ab6d4" /></div>
                  <div className="w-[36px] flex items-center justify-center"><Paint fill="url(#plin)" /></div>
                  <div className="w-[36px] flex items-center justify-center"><Paint fill="url(#prad)" /></div>
                  <div className="w-[36px] flex items-center justify-center">
                    <Paint fill="#fff" extra={<path d="M1 1h7v7h-7zM8 8h7v7h-7z" fill="#9ab6d4" />} />
                  </div>
                  <div className="w-[36px] flex items-center justify-center">
                    <Paint fill="#fff" extra={
                      <g fill="#9ab6d4">
                        <circle cx="4" cy="4" r="2.500" /><circle cx="12" cy="4" r="2.500" /><circle cx="8" cy="8" r="2.500" />
                        <circle cx="4" cy="12" r="2.500" /><circle cx="12" cy="12" r="2.500" />
                      </g>
                    } />
                  </div>
                  <div className="w-[36px] flex items-center justify-center">
                    <Paint fill="#9ab6d4" extra={<path d="M3 3h11v11h-11z" fill="#fff" />} />
                  </div>
                  <div className="w-[36px] flex items-center justify-center text-[#111] font-bold text-[17px]">?</div>
                  <div className="w-[36px] flex items-center justify-center"><Heart hole /></div>
                  <div className="w-[36px] flex items-center justify-center rounded-[5px] bg-[#d5d0cc]"><Heart /></div>
                </div>

                <div className="mt-[8px] pl-[8px] font-bold leading-[19px] h-[19px] shrink-0">Flat color</div>

                <div className="flex gap-[2px] mt-[5px] pl-[8px] shrink-0">
                  {modes.map((m, i) => (
                    <div
                      key={m.t}
                      className={`${m.w} h-[34px] flex items-center justify-center rounded-[5px] border border-[#cdc7c2] ${
                        i === 2 ? 'bg-[#d5d0cc]' : 'bg-gradient-to-b from-[#f6f5f4] to-[#edebe9]'
                      }`}
                    >
                      {m.t}
                    </div>
                  ))}
                </div>

                <div className="mt-[3px] pl-[8px] shrink-0">
                  <SliderRow
                    label="H"
                    value="0"
                    noMinus
                    bar="bg-[linear-gradient(to_right,#f00,#ff0,#0f0,#0ff,#00f,#f0f,#f00)]"
                  />
                  <SliderRow label="S" value="0" noMinus bar="bg-black" />
                  <SliderRow label="V" value="0" noMinus bar="bg-gradient-to-r from-black to-white" />
                  <SliderRow
                    label="A"
                    value="100"
                    noPlus
                    side="right"
                    bar="bg-[linear-gradient(to_right,rgba(0,0,0,0),#000),repeating-conic-gradient(#999_0_25%,#5f5f5f_0_50%)] bg-[length:100%_100%,16px_16px]"
                  />
                </div>

                {/* footer row */}
                <div className="mt-auto mb-[5px] h-[34px] flex items-center pl-[9px] pr-[9px] shrink-0">
                  <svg width="17" height="17" viewBox="0 0 17 17" className="block">
                    <path d="M1 1l15 8-15 7z" fill="#e6f0d8" />
                    <path d="M1 1l7 4v7l-7 4z" fill="#d8edc8" />
                    <path d="M8 5l8 4-8 3z" fill="#f3dbe9" />
                  </svg>
                  <div className="w-[16px] h-[16px] ml-[3px] rounded-full border-[5px] border-[#f5c6c6] bg-white" />
                  <svg width="18" height="17" viewBox="0 0 18 17" className="block ml-[3px]">
                    <g fill="#cfcfcf">
                      <circle cx="5" cy="4" r="3" /><circle cx="12" cy="5" r="3" /><circle cx="8" cy="9" r="3.500" />
                      <circle cx="4" cy="14" r="2.500" /><circle cx="14" cy="12" r="3" />
                    </g>
                  </svg>
                  <div className="ml-[14px]"><IcDropper s={18} /></div>
                  <div className="ml-auto flex items-center">
                    <span className="mr-[1px]">RGBA<u>:</u></span>
                    <div className="w-[90px] h-[34px] rounded-[5px] border border-[#cdc7c2] bg-white flex items-center pl-[8px] text-[15.600px] text-[#1d1d1d]">
                      000000ff
                    </div>
                  </div>
                </div>
              </div>

              {/* blend */}
              <div className="h-[49px] shrink-0 flex items-center justify-end pr-[11px] border-b border-[#e8e6e3]">
                <span className="mr-[10px]">Blend mode:</span>
                <Select text={<span>Normal</span>} className="w-[120px] pl-[12px] pr-[10px]" />
              </div>

              {/* blur / opacity */}
              <div className="flex mt-[9px] h-[32px] pl-px shrink-0 text-[#1d1d1d]">
                <div className="w-[302px] mr-[1px] rounded-[2px] border border-[#cdc7c2] border-l-[2px] border-l-[#1c5fb0] bg-[#e1dedb] flex items-center pl-[3px]">
                  Blur (%)
                </div>
                <div className="w-[41px] pl-[1px] flex items-center text-[15.500px]">0.0</div>
                <div className="w-[17px] border-l border-[#e8e6e3] flex items-center justify-center text-[22px] font-medium leading-none text-[#d6d6d4]">−</div>
                <div className="w-[16px] border-l border-[#e8e6e3] flex items-center justify-center text-[22px] font-medium leading-none text-[#2e3436]">+</div>
              </div>
              <div className="flex h-[32px] pl-px shrink-0 text-[#1d1d1d]">
                <div className="w-[302px] mr-[1px] rounded-[2px] border border-[#1c5fb0] bg-[#3584e4] text-white flex items-center pl-[4px]">
                  Opacity (%)
                </div>
                <div className="w-[41px] pl-[1px] flex items-center text-[15.500px]">100.0</div>
                <div className="w-[17px] border-l border-[#e8e6e3] flex items-center justify-center text-[22px] font-medium leading-none text-[#2e3436]">−</div>
                <div className="w-[16px] border-l border-[#e8e6e3] flex items-center justify-center text-[22px] font-medium leading-none text-[#d6d6d4]">+</div>
              </div>
            </div>
          </div>

          {/* snap bar */}
          <div className="flex-1 flex flex-col items-end pr-[3px] pt-[5px]">
            <div className="w-[37px] flex flex-col items-center">
              <div className="h-[35px] w-[36px] flex items-center justify-center rounded-[5px] bg-[#d5d0cc]"><SnapPair /></div>
              <HSep />
              <div className="h-[35px] flex items-center"><SnapPair /></div>
              <div className="h-[35px] flex items-center"><SnapFaded k={0} /></div>
              <div className="h-[35px] flex items-center"><SnapFaded k={1} /></div>
              <div className="h-[35px] flex items-center"><SnapFaded k={2} /></div>
              <div className="h-[35px] flex items-center"><SnapFaded k={3} /></div>
              <HSep />
              <div className="h-[35px] w-[36px] flex items-center justify-center rounded-[5px] bg-[#d5d0cc]"><SnapPair /></div>
              <div className="h-[35px] flex items-center"><SnapCurve g /></div>
              <div className="h-[35px] flex items-center"><SnapCross /></div>
              <div className="h-[35px] w-[36px] flex items-center justify-center rounded-[5px] bg-[#d5d0cc]"><SnapCurve /></div>
              <div className="h-[35px] flex items-center"><SnapCusp /></div>
              <div className="h-[35px] flex items-center"><SnapLine /></div>
              <HSep />
              <div className="h-[34px] mb-px w-[36px] flex items-center justify-center rounded-[5px] bg-[#d5d0cc]"><SnapPair /></div>
              <div className="h-[34px] mb-px w-[36px] flex items-center justify-center rounded-[5px] bg-[#d5d0cc]"><SnapMid /></div>
              <div className="h-[35px] flex items-center"><SnapGuide /></div>
              <div className="mt-[27px] w-0 h-0 border-y-[6px] border-y-transparent border-l-[7px] border-l-[#2e3436]" />
            </div>
          </div>
        </div>

        {/* palette + scrollbar */}
        <div className="h-[34px] shrink-0 flex pt-px">
          <div className="w-[1075px] shrink-0 flex flex-col">
            <div className="h-[19px] flex overflow-hidden">
              <svg width="19" height="19" viewBox="0 0 19 19" className="block shrink-0">
                <rect width="19" height="19" fill="#fff" />
                <path d="M1 1l17 17M18 1l-17 17" stroke="#7d1a1a" strokeWidth="1.600" />
              </svg>
              {swatches.map((c, i) => (
                <div key={i} className="w-[19px] h-[19px] shrink-0" style={{ backgroundColor: c }} />
              ))}
            </div>
            <div className="h-[14px] bg-[#cdcdcd] flex items-center pl-[3px]">
              <div className="w-[134px] h-[9px] rounded-full bg-[#7e8182]" />
            </div>
          </div>
          <div className="flex-1 flex items-center justify-center pl-[2px]">
            <div className="w-0 h-0 border-y-[6px] border-y-transparent border-r-[6px] border-r-[#2e3436]" />
          </div>
        </div>

        {/* status bar */}
        <div className="flex-1 flex items-stretch text-[13.800px] text-[#555a5c] min-h-0">
          <div className="w-[48px] shrink-0 flex flex-col items-end leading-[19px] pt-[2px]">
            <span>Fill:</span>
            <span>Stroke:</span>
          </div>
          <div className="w-[120px] shrink-0 flex flex-col pl-[15px] pt-px">
            <div className="w-[50px] h-[19px] rounded-[2px] bg-black shrink-0" />
            <div className="flex items-baseline whitespace-nowrap leading-[19px]">
              <span className="italic ml-[8px]">None</span>
              <span className="ml-[12px] text-[15.500px]">0.0353</span>
            </div>
          </div>
          <div className="w-[18px] shrink-0 flex items-center justify-end pr-[1px] pb-px">O:</div>
          <Spin value="100" hClass="h-[38px]" className="w-[67px] ml-[1px]" noPlus entry="pl-[3px]" />
          <div className="w-px ml-[3px] h-[38px] bg-[#dedcd9]" />
          <div className="w-[38px] shrink-0 flex items-center justify-center">
            <svg width="20" height="16" viewBox="0 0 20 16" className="block">
              <path d="M2 9c3-5 13-5 16 0-3 5-13 5-16 0z" fill="#fff" stroke="#222" strokeWidth="1.300" />
              <circle cx="10" cy="9" r="3" fill="#222" />
              <path d="M4 5L2.500 3M8 3.500L7.500 1M12 3.500L12.500 1M16 5l1.500-2" stroke="#222" strokeWidth="1.200" />
            </svg>
          </div>
          <div className="w-[32px] shrink-0 flex items-center justify-center">
            <svg width="14" height="18" viewBox="0 0 14 18" className="block">
              <path d="M3.500 9V5c0-4 6-4 6.500-1" fill="none" stroke="#222" strokeWidth="1.300" />
              <path d="M1.500 9h11v7.500h-11z" fill="#f7e9a8" stroke="#222" />
              <circle cx="7" cy="12.500" r="1.300" fill="#222" />
            </svg>
          </div>
          <div className="w-[87px] ml-[2px] h-[36px] mt-px shrink-0 rounded-[5px] border border-[#cdc7c2] bg-gradient-to-b from-[#f6f5f4] to-[#edebe9] flex items-center justify-center gap-[5px] text-[12px] font-semibold text-[#4a4f52]">
            <span>•Layer 1</span>
            <Chevron />
          </div>
          <div className="w-[300px] ml-[19px] shrink-0 flex flex-col leading-[19px] pt-[2px] whitespace-nowrap">
            <span><b>Click</b> to select or create text, <b>drag</b> to create</span>
            <span>flowed text; then type.</span>
          </div>
          <div className="w-px h-[38px] bg-[#dedcd9]" />
          <div className="w-[79px] shrink-0 flex flex-col leading-[19px] pt-[1px] pl-[9px] pr-[2px]">
            <div className="flex items-baseline justify-between"><span>X:</span><span className="text-[15px]">37.40</span></div>
            <div className="flex items-baseline justify-between"><span>Y:</span><span className="text-[15px]">24.45</span></div>
          </div>
          <div className="w-[33px] shrink-0 flex items-center justify-center pl-[2px]">Z:</div>
          <Spin value="444%" hClass="h-[38px]" className="w-[96px]" btn="w-[21px]" entry="pl-[6px]" />
          <div className="w-[33px] shrink-0 flex items-center justify-center pl-[6px]">R:</div>
          <Spin value="0.00°" hClass="h-[38px]" className="w-[112px]" btn="w-[21px]" entry="pl-[13px]" />
        </div>
      </div>
    </div>
  )
}
